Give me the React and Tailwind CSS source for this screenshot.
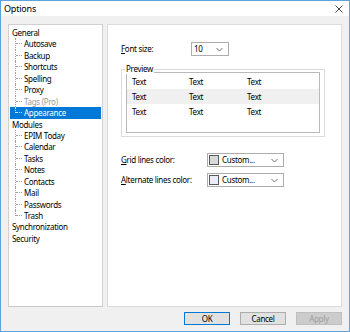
import React from "react";

const font = { fontFamily: '"Noto Sans", "Open Sans", sans-serif' };

const tree = [
  { t: "General", top: true },
  { t: "Autosave" },
  { t: "Backup" },
  { t: "Shortcuts" },
  { t: "Spelling" },
  { t: "Proxy" },
  { t: "Tags (Pro)", dis: true },
  { t: "Appearance", sel: true, last: true },
  { t: "Modules", top: true },
  { t: "EPIM Today" },
  { t: "Calendar" },
  { t: "Tasks" },
  { t: "Notes" },
  { t: "Contacts" },
  { t: "Mail" },
  { t: "Passwords" },
  { t: "Trash", last: true },
  { t: "Synchronization", top: true },
  { t: "Security", top: true },
];

function TreeRow({ item }) {
  if (item.top) {
    return (
      <div className="h-[11.45px] leading-[11.45px] pl-[2px] text-[#000]">{item.t}</div>
    );
  }
  const line = item.sel ? "border-[#cfe3f7]" : "border-[#a0a0a0]";
  return (
    <div
      className={
        "flex h-[11.45px] leading-[11.45px] " +
        (item.sel ? "bg-[#0078d7] text-white" : item.dis ? "text-[#9a9a9a]" : "text-black")
      }
    >
      <div className="relative w-[14px] shrink-0">
        <span
          className={
            "absolute left-[5px] top-0 border-l border-dotted " + line + (item.last ? " h-[6px]" : " bottom-0")
          }
        />
        <span className={"absolute left-[6px] top-[5px] w-[6px] border-t border-dotted " + line} />
      </div>
      <span>{item.t}</span>
    </div>
  );
}

function Chevron() {
  return (
    <svg width="7" height="5" viewBox="0 0 7 5" className="shrink-0">
      <path d="M0.5 1 L3.5 4 L6.5 1" fill="none" stroke="#606060" strokeWidth="0.9" />
    </svg>
  );
}

function ColorCombo({ swatch }) {
  return (
    <div className="flex h-[14px] w-[77px] items-center border border-[#adadad] bg-white pl-[1px] pr-[5px]">
      <div className={"h-[10px] w-[10px] border border-[#5a5a5a] " + swatch} />
      <span className="ml-[3px] flex-1 leading-none">Custom...</span>
      <Chevron />
    </div>
  );
}

export default function App() {
  return (
    <div
      style={font}
      className="flex h-[332px] w-[350px] flex-col overflow-hidden border border-[#5fa2dd] bg-[#f0f0f0] text-[8px] tracking-[-0.3px] text-black"
    >
      <div className="flex h-[15px] shrink-0 items-center justify-between bg-white pl-[3px] pr-[6px]">
        <span className="text-[9px] leading-none tracking-[-0.2px]">Options</span>
        <svg width="8" height="8" viewBox="0 0 8 8">
          <path d="M0.5 0.5 L7.5 7.5 M7.5 0.5 L0.5 7.5" stroke="#333" strokeWidth="0.9" />
        </svg>
      </div>
      <div className="flex flex-1 flex-col px-[7px] pt-[8px] pb-[5px]">
        <div className="flex h-[283px] gap-[4px]">
          <div className="w-[95px] shrink-0 border border-[#d0d0d0] border-b-[#c8c8c8] bg-white p-[1px] pt-[2px]">
            {tree.map((it) => (
              <TreeRow key={it.t} item={it} />
            ))}
          </div>
          <div className="flex-1 border border-[#dcdcdc] bg-white pl-[13px] pt-[17px]">
            <div className="flex h-[14px] items-center">
              <span className="w-[70px]">
                <span className="underline">F</span>ont size:
              </span>
              <div className="flex h-[14px] w-[38px] items-center justify-between border border-[#adadad] pl-[2px] pr-[5px]">
                <span className="leading-none">10</span>
                <Chevron />
              </div>
            </div>
            <div className="relative mt-[13px] h-[68px] w-[204px] border border-[#dcdcdc] pt-[2px] pl-[4px]">
              <span className="absolute left-[3px] top-[-7px] bg-white px-[1px] leading-[11px]">Preview</span>
              <div className="h-[61px] w-[194px] border border-[#b9b9b9] pt-[1px]">
                {[0, 1, 2].map((r) => (
                  <div
                    key={r}
                    className={"grid h-[15px] grid-cols-[57px_58px_1fr] items-center pl-[5px] " + (r === 1 ? "bg-[#f0f0f0]" : "")}
                  >
                    <span>Text</span>
                    <span>Text</span>
                    <span>Text</span>
                  </div>
                ))}
              </div>
            </div>
            <div className="mt-[16px] flex items-center">
              <span className="w-[86px]">
                <span className="underline">G</span>rid lines color:
              </span>
              <ColorCombo swatch="bg-[#d8d8d8]" />
            </div>
            <div className="mt-[6px] flex items-center">
              <span className="w-[86px]">
                <span className="underline">A</span>lternate lines color:
              </span>
              <ColorCombo swatch="bg-[#ececf8]" />
            </div>
          </div>
        </div>
        <div className="mt-[5px] flex justify-end gap-[10px]">
          <div className="flex h-[13px] w-[46px] items-center justify-center border border-[#0078d7] bg-[#e1e1e1] leading-none">
            OK
          </div>
          <div className="flex h-[13px] w-[46px] items-center justify-center border border-[#adadad] bg-[#e1e1e1] leading-none">
            Cancel
          </div>
          <div className="flex h-[13px] w-[46px] items-center justify-center border border-[#bfbfbf] bg-[#cccccc] leading-none text-[#a0a0a0]">
            Apply
          </div>
        </div>
      </div>
    </div>
  );
}
